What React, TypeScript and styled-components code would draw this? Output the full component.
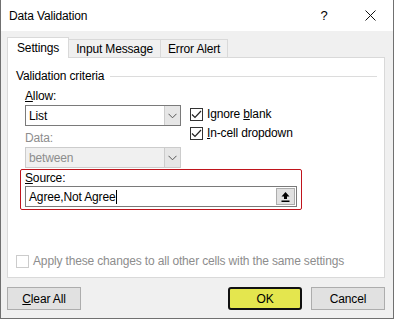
import React from 'react';
import styled, { createGlobalStyle } from 'styled-components';

const Global = createGlobalStyle`
  html, body { margin: 0; padding: 0; background: #f0f0f0; }
  * { box-sizing: border-box; }
  body {
    font-family: "Liberation Sans", Arial, sans-serif;
    font-size: 12px;
    letter-spacing: -0.15px;
    color: #000;
  }
`;

const Window = styled.div`
  width: 394px;
  height: 319px;
  display: flex;
  flex-direction: column;
  background: #f0f0f0;
  border: 1px solid #707070;
  border-top: none;
`;

const TitleBar = styled.div`
  height: 31px;
  background: #fff;
  display: flex;
  align-items: center;
  padding-left: 8px;
`;

const Title = styled.div`
  flex: 1;
  font-size: 12px;
`;

const TitleButton = styled.div`
  width: 46px;
  height: 31px;
  display: flex;
  align-items: center;
  justify-content: center;
  font-size: 13px;
`;

const TabStrip = styled.div`
  display: flex;
  align-items: flex-end;
  padding: 6px 0 0 6px;
  height: 26px;
`;

const Tab = styled.div<{ $active?: boolean }>`
  height: ${p => (p.$active ? 21 : 18)}px;
  padding: 0 ${p => (p.$active ? 9 : 7)}px;
  display: flex;
  align-items: center;
  background: ${p => (p.$active ? '#fff' : '#f0f0f0')};
  border: 1px solid #d9d9d9;
  border-bottom: none;
  margin-bottom: ${p => (p.$active ? -1 : 0)}px;
  position: relative;
  z-index: ${p => (p.$active ? 1 : 0)};
  margin-left: ${p => (p.$active ? 0 : -1)}px;
`;

const Panel = styled.div`
  margin: 0 8px 0 6px;
  height: 221px;
  background: #fff;
  border: 1px solid #d9d9d9;
  display: flex;
  flex-direction: column;
  padding: 11px 7px 0 8px;
`;

const GroupHeading = styled.div`
  display: flex;
  align-items: center;
  gap: 6px;
  height: 14px;
  &::after {
    content: '';
    flex: 1;
    height: 1px;
    background: #dcdcdc;
  }
`;

const CriteriaRow = styled.div`
  display: flex;
  padding-left: 9px;
  margin-top: 5px;
`;

const Column = styled.div`
  width: 156px;
  display: flex;
  flex-direction: column;
`;

const Label = styled.div<{ $disabled?: boolean }>`
  height: 16px;
  line-height: 16px;
  margin-bottom: 1px;
  color: ${p => (p.$disabled ? '#8d8d8d' : '#000')};
`;

const Combo = styled.div<{ $disabled?: boolean }>`
  height: 21px;
  flex: none;
  display: flex;
  border: 1px solid ${p => (p.$disabled ? '#cccccc' : '#7a7a7a')};
  background: ${p => (p.$disabled ? '#f0f0f0' : '#fff')};
  color: ${p => (p.$disabled ? '#8d8d8d' : '#000')};
  margin-bottom: 4px;
`;

const ComboText = styled.div`
  flex: 1;
  padding-left: 3px;
  display: flex;
  align-items: center;
`;

const ComboButton = styled.div`
  width: 16px;
  background: #e6e6e6;
  border-left: 1px solid #cccccc;
  display: flex;
  align-items: center;
  justify-content: center;
`;

const Checks = styled.div`
  display: flex;
  flex-direction: column;
  gap: 5px;
  padding: 19px 0 0 9px;
`;

const CheckRow = styled.label<{ $disabled?: boolean }>`
  display: flex;
  align-items: center;
  gap: 4px;
  height: 14px;
  color: ${p => (p.$disabled ? '#8d8d8d' : '#000')};
`;

const Box = styled.span<{ $disabled?: boolean }>`
  width: 13px;
  height: 13px;
  border: 1px solid ${p => (p.$disabled ? '#cccccc' : '#333')};
  background: #fff;
  display: flex;
  align-items: center;
  justify-content: center;
`;

const SourceBox = styled.div`
  flex: none;
  margin: -3px 75px 0 4px;
  height: 41px;
  border: 1px solid #c0141c;
  border-radius: 2px;
  padding: 1px 4px 0 4px;
`;

const SourceLabel = styled.div`
  height: 14px;
  line-height: 14px;
  margin-bottom: 1px;
`;

const SourceInput = styled.div`
  height: 21px;
  border: 1px solid #7a7a7a;
  display: flex;
  align-items: center;
  padding: 0 1px 0 3px;
`;

const Caret = styled.span`
  width: 1px;
  height: 14px;
  background: #000;
  margin-left: 1px;
`;

const CollapseButton = styled.div`
  margin-left: auto;
  width: 19px;
  height: 17px;
  background: #e1e1e1;
  border: 1px solid #adadad;
  display: flex;
  align-items: center;
  justify-content: center;
`;

const Spacer = styled.div`
  flex: 1;
`;

const ApplyRow = styled.div`
  margin-bottom: 9px;
`;

const Footer = styled.div`
  display: flex;
  align-items: center;
  gap: 9px;
  padding: 9px 8px 0 6px;
`;

const Button = styled.div<{ $default?: boolean; $pushRight?: boolean }>`
  width: 74px;
  height: 23px;
  display: flex;
  align-items: center;
  justify-content: center;
  background: ${p => (p.$default ? '#e4e64e' : '#e1e1e1')};
  border: ${p => (p.$default ? '2px solid #111' : '1px solid #adadad')};
  border-radius: ${p => (p.$default ? 3 : 0)}px;
  margin-left: ${p => (p.$pushRight ? 'auto' : '0')};
`;

const U = styled.span`
  text-decoration: underline;
`;

const Chevron = () => (
  <svg width="9" height="6" viewBox="0 0 9 6">
    <path d="M0.5 0.8 L4.5 4.8 L8.5 0.8" fill="none" stroke="#555" strokeWidth="1" />
  </svg>
);

const Tick = () => (
  <svg width="11" height="9" viewBox="0 0 11 9">
    <path d="M1 4.5 L4 7.5 L10 1" fill="none" stroke="#222" strokeWidth="1.2" />
  </svg>
);

const CollapseIcon = () => (
  <svg width="9" height="10" viewBox="0 0 9 10">
    <path d="M4.5 0 L8.5 4.5 L6 4.5 L6 7 L3 7 L3 4.5 L0.5 4.5 Z" fill="#000" />
    <rect x="0.5" y="8.5" width="8" height="1.5" fill="#000" />
  </svg>
);

const CloseIcon = () => (
  <svg width="11" height="11" viewBox="0 0 11 11">
    <path d="M0.5 0.5 L10.5 10.5 M10.5 0.5 L0.5 10.5" stroke="#111" strokeWidth="1" />
  </svg>
);

export default function App() {
  return (
    <>
      <Global />
      <Window>
        <TitleBar>
          <Title>Data Validation</Title>
          <TitleButton>?</TitleButton>
          <TitleButton>
            <CloseIcon />
          </TitleButton>
        </TitleBar>

        <TabStrip>
          <Tab $active>Settings</Tab>
          <Tab>Input Message</Tab>
          <Tab>Error Alert</Tab>
        </TabStrip>

        <Panel>
          <GroupHeading>Validation criteria</GroupHeading>
          <CriteriaRow>
            <Column>
              <Label>
                <U>A</U>llow:
              </Label>
              <Combo>
                <ComboText>List</ComboText>
                <ComboButton>
                  <Chevron />
                </ComboButton>
              </Combo>
              <Label $disabled>Data:</Label>
              <Combo $disabled>
                <ComboText>between</ComboText>
                <ComboButton>
                  <Chevron />
                </ComboButton>
              </Combo>
            </Column>
            <Checks>
              <CheckRow>
                <Box>
                  <Tick />
                </Box>
                <span>
                  Ignore <U>b</U>lank
                </span>
              </CheckRow>
              <CheckRow>
                <Box>
                  <Tick />
                </Box>
                <span>
                  <U>I</U>n-cell dropdown
                </span>
              </CheckRow>
            </Checks>
          </CriteriaRow>

          <SourceBox>
            <SourceLabel>
              <U>S</U>ource:
            </SourceLabel>
            <SourceInput>
              Agree,Not Agree
              <Caret />
              <CollapseButton>
                <CollapseIcon />
              </CollapseButton>
            </SourceInput>
          </SourceBox>

          <Spacer />
          <ApplyRow>
            <CheckRow $disabled>
              <Box $disabled />
              <span>Apply these changes to all other cells with the same settings</span>
            </CheckRow>
          </ApplyRow>
        </Panel>

        <Footer>
          <Button>
            <span>
              <U>C</U>lear All
            </span>
          </Button>
          <Button $default $pushRight>
            OK
          </Button>
          <Button>Cancel</Button>
        </Footer>
      </Window>
    </>
  );
}
